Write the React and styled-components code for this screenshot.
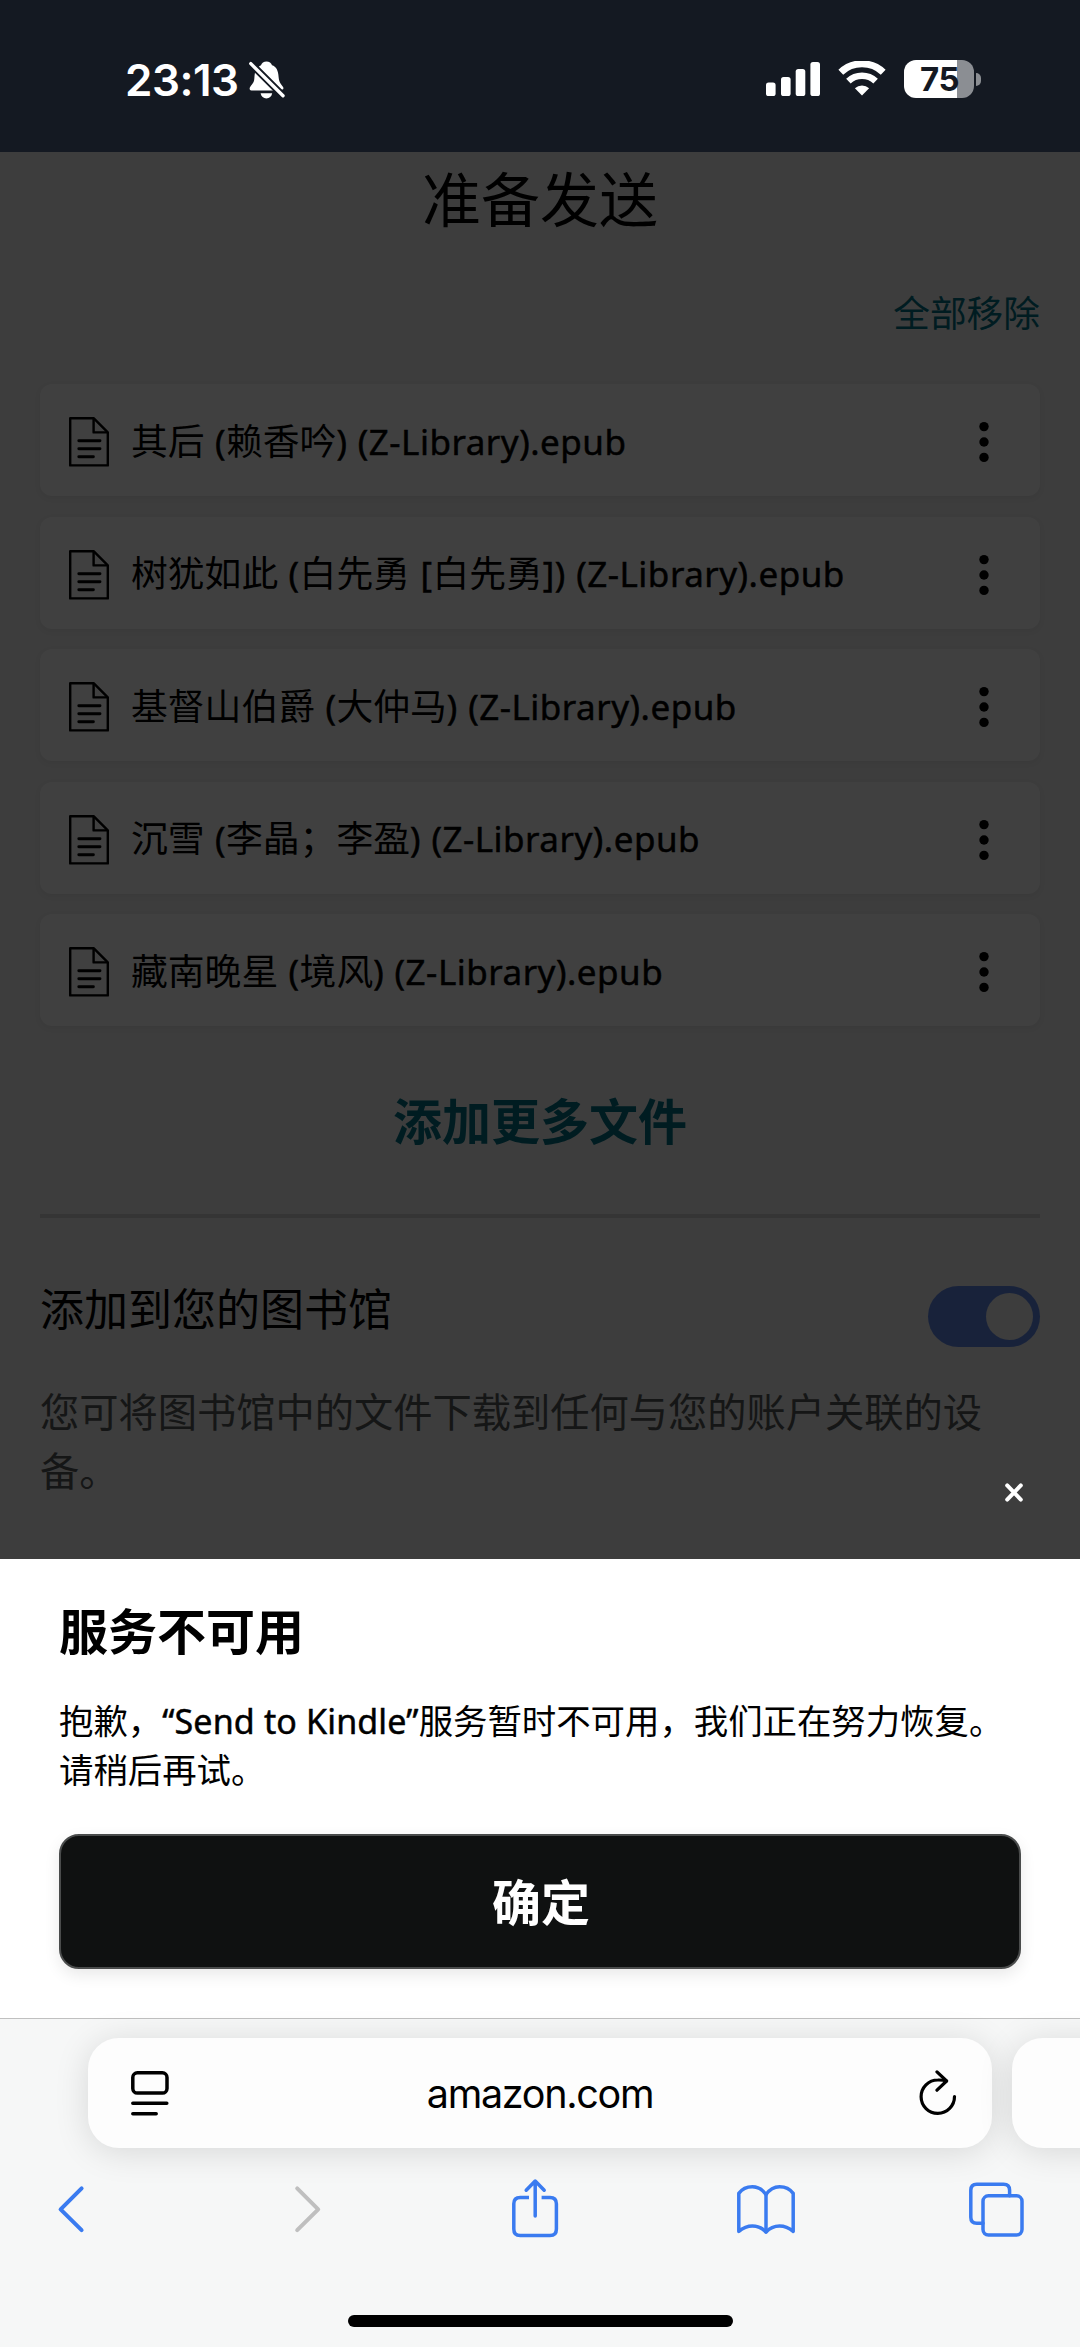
import React from 'react';
import styled, { createGlobalStyle } from 'styled-components';

const files = [
  '其后 (赖香吟) (Z-Library).epub',
  '树犹如此 (白先勇 [白先勇]) (Z-Library).epub',
  '基督山伯爵 (大仲马) (Z-Library).epub',
  '沉雪 (李晶；李盈) (Z-Library).epub',
  '藏南晚星 (境风) (Z-Library).epub',
];

// latin runs get their own face, the rest stays in the CJK one
const splitName = (name) =>
  name.split(/([\x20-\x7e]+)/).map((part, i) =>
    i % 2 ? <Latin key={i}>{part}</Latin> : part
  );

const StatusIcons = () => (
  <StatusRight>
    <svg width="54" height="36" viewBox="0 0 54 36" fill="#fff">
      <rect x="0" y="21.5" width="9.6" height="13.5" rx="2.6" />
      <rect x="15" y="16" width="9.6" height="19" rx="2.6" />
      <rect x="29.7" y="8" width="9.6" height="27" rx="2.6" />
      <rect x="44.4" y="1" width="9.6" height="34" rx="2.6" />
    </svg>
    <svg width="48" height="36" viewBox="0 0 48 36" fill="none" stroke="#fff">
      <path d="M2.8 11.2 A31 31 0 0 1 45.2 11.2" strokeWidth="7" />
      <path d="M10.4 20.1 A20 20 0 0 1 37.6 20.1" strokeWidth="6.6" />
      <path d="M24 34.6 L16.9 27.2 A10.4 10.4 0 0 1 31.1 27.2 Z" fill="#fff" stroke="none" />
    </svg>
    <BatteryWrap>
      <Battery>75</Battery>
      <BatteryTip />
    </BatteryWrap>
  </StatusRight>
);

const BellOff = () => (
  <svg width="36" height="38" viewBox="0 0 36 38">
    <path
      fill="#fff"
      d="M17.5 0.5 C14.8 0.5 12.6 2 12 4.3 C11 4.8 10.2 5.4 9.6 6 L30.8 27.2 C31.6 28 32.6 28.9 33.4 28.6 C34.6 28 34.9 26.9 33.7 25.4 C31.2 22.4 30 20.6 29.6 16 C29.2 9.4 27.2 5.6 23 4.3 C22.4 2 20.2 0.5 17.5 0.5 Z"
    />
    <path
      fill="#fff"
      d="M6 11.4 L24.2 29.6 H2.4 C0.4 29.6 0 27 1.6 25.2 C4.4 22 5.2 20.6 5.4 16.8 C5.5 15 5.6 13 6 11.4 Z"
    />
    <path fill="#fff" d="M11.6 32.2 H23.2 C22.6 35.6 20.4 37.4 17.4 37.4 C14.4 37.4 12.2 35.6 11.6 32.2 Z" />
    <path d="M1.8 2.6 L34 34.8" stroke="#141922" strokeWidth="7" />
    <path d="M1.8 2.6 L34 34.8" stroke="#fff" strokeWidth="3.4" strokeLinecap="round" />
  </svg>
);

const FileIcon = () => (
  <svg width="40" height="50" viewBox="0 0 40 50" fill="none" stroke="#000" strokeWidth="2.4">
    <path d="M1.2 1.2 H24.6 L38.8 15.4 V48.4 H1.2 Z" strokeLinejoin="round" />
    <path d="M24.6 1.2 V15.4 H38.8" strokeLinejoin="round" />
    <path d="M9.8 23.8 H31 M9.8 31.8 H31 M9.8 39.8 H24.4" strokeWidth="2.9" strokeLinecap="round" />
  </svg>
);

const MoreIcon = () => (
  <svg width="10" height="42" viewBox="0 0 10 42" fill="#000">
    <circle cx="5" cy="5.6" r="4.7" />
    <circle cx="5" cy="21" r="4.7" />
    <circle cx="5" cy="36.4" r="4.7" />
  </svg>
);

const App = () => (
  <Screen>
    <GlobalStyle />
    <StatusBar>
      <Clock>
        <span>23:13</span>
        <BellOff />
      </Clock>
      <StatusIcons />
    </StatusBar>

    <Page>
      <Heading>准备发送</Heading>
      <RemoveAll>全部移除</RemoveAll>
      <FileList>
        {files.map((name) => (
          <FileRow key={name}>
            <FileIcon />
            <FileName>{splitName(name)}</FileName>
            <MoreIcon />
          </FileRow>
        ))}
      </FileList>
      <AddMore>添加更多文件</AddMore>
      <Divider />
      <LibraryRow>
        <LibraryLabel>添加到您的图书馆</LibraryLabel>
        <Toggle>
          <Knob />
        </Toggle>
      </LibraryRow>
      <LibraryHint>您可将图书馆中的文件下载到任何与您的账户关联的设备。</LibraryHint>
      <Overlay>
        <svg width="18" height="19" viewBox="0 0 18 19" stroke="#fff" strokeWidth="4" strokeLinecap="round">
          <path d="M2.2 2.4 L15.8 16.6 M15.8 2.4 L2.2 16.6" />
        </svg>
      </Overlay>
    </Page>

    <Sheet>
      <SheetTitle>服务不可用</SheetTitle>
      <SheetText>
        抱歉，<Quote>“Send to Kindle”</Quote>服务暂时不可用，我们正在努力恢复。
        <br />
        请稍后再试。
      </SheetText>
      <OkButton>确定</OkButton>
    </Sheet>

    <BrowserBar>
      <AddressRow>
        <AddressPill>
          <svg width="38" height="45" viewBox="0 0 38 45" fill="none" stroke="#000" strokeWidth="3.5" strokeLinecap="round">
            <rect x="1.8" y="1.8" width="34.2" height="20.2" rx="4.6" />
            <path d="M1.8 32.3 H35.8 M1.8 42.7 H25.2" />
          </svg>
          <Host>amazon.com</Host>
          <svg width="38" height="46" viewBox="0 0 38 46" fill="none" stroke="#000" strokeWidth="3.2" strokeLinecap="round" strokeLinejoin="round">
            <path d="M35.5 26.6 A16.7 16.7 0 1 1 18.8 10 C22 9.9 25 10.2 27.4 11" />
            <path d="M18 1.9 L27.6 11 L18 20.2" />
          </svg>
        </AddressPill>
        <NextTab />
      </AddressRow>
      <Toolbar>
        <ToolIcon viewBox="0 0 64 64" strokeWidth="4">
          <path d="M37.6 11.4 L16.6 32.3 L37.6 53.2" />
        </ToolIcon>
        <ToolIcon viewBox="0 0 64 64" strokeWidth="4" $muted>
          <path d="M23.2 11.4 L44.2 32.3 L23.2 53.2" />
        </ToolIcon>
        <ToolIcon viewBox="0 0 64 64" strokeWidth="3.5">
          <path d="M25 20.4 H16.2 Q9.8 20.4 9.8 26.8 V52 Q9.8 58.6 16.2 58.6 H46 Q52.4 58.6 52.4 52 V26.8 Q52.4 20.4 46 20.4 H37.6" strokeLinecap="butt" />
          <path d="M31.2 39 V4.2 M22.2 13.2 L31.2 4 L40.2 13.2" />
        </ToolIcon>
        <ToolIcon viewBox="0 0 64 64" strokeWidth="3.5">
          <path d="M32 17.6 C28.6 12.6 23.6 9.7 18.4 9.7 C13 9.7 8 12 4.8 16.4 V54.4 C8.8 51 13 48.9 18.4 48.9 C23.8 48.9 28.4 51 32 55 C35.6 51 40.2 48.9 45.6 48.9 C51 48.9 55.2 51 59.2 54.4 V16.4 C56 12 51 9.7 45.6 9.7 C40.4 9.7 35.4 12.6 32 17.6 Z" />
          <path d="M32 17.6 V55" />
        </ToolIcon>
        <ToolIcon viewBox="0 0 64 64" strokeWidth="3.5">
          <rect x="19" y="18.8" width="39" height="39.2" rx="5.4" />
          <path d="M19 46.2 H12.8 Q6.8 46.2 6.8 40.2 V13.2 Q6.8 7.2 12.8 7.2 H39.6 Q45.6 7.2 45.6 13.2 V18.8" />
        </ToolIcon>
      </Toolbar>
      <HomeIndicator />
    </BrowserBar>
  </Screen>
);

export default App;

const GlobalStyle = createGlobalStyle`
  * {
    box-sizing: border-box;
  }
  body {
    margin: 0;
    font-family: "Noto Sans CJK SC", sans-serif;
    color: #000;
  }
  svg {
    display: block;
    flex-shrink: 0;
  }
`;

const Screen = styled.div`
  display: flex;
  flex-direction: column;
  width: 1080px;
  height: 2347px;
  overflow: hidden;
  background: #fff;
`;

const StatusBar = styled.header`
  display: flex;
  justify-content: space-between;
  flex-shrink: 0;
  height: 152px;
  padding: 60px 99px 0 125px;
  background: #141922;
  color: #fff;
  font-family: Inter, sans-serif;
`;

const Clock = styled.div`
  display: flex;
  gap: 10px;
  height: 40px;
  align-items: center;
  font-size: 44px;
  font-weight: 600;
  line-height: 40px;
  letter-spacing: -0.5px;
`;

const StatusRight = styled.div`
  display: flex;
  height: 38px;
  align-items: center;
  gap: 18px;
`;

const BatteryWrap = styled.div`
  display: flex;
  align-items: center;
  gap: 2px;
`;

const Battery = styled.div`
  width: 70px;
  height: 38px;
  padding-left: 1px;
  border-radius: 12px;
  background: linear-gradient(to right, #fff 53px, #8b8e93 53px);
  color: #141922;
  font-size: 33px;
  font-weight: 700;
  line-height: 39px;
  text-align: center;
  letter-spacing: -0.5px;
`;

const BatteryTip = styled.div`
  width: 5px;
  height: 13px;
  border-radius: 0 6px 6px 0;
  background: #8b8e93;
`;

const Page = styled.main`
  position: relative;
  flex-shrink: 0;
  height: 1407px;
  padding: 9px 40px 0;
  background: #f1f1f1;
`;

const Overlay = styled.div`
  position: absolute;
  inset: 0;
  display: flex;
  justify-content: flex-end;
  align-items: flex-end;
  padding: 0 57px 57px 0;
  background: rgba(0, 0, 0, 0.75);
`;

const Heading = styled.h1`
  margin: 0;
  font-size: 59px;
  font-weight: 400;
  line-height: 72px;
  text-align: center;
`;

const RemoveAll = styled.div`
  margin-top: 56px;
  color: #007185;
  font-size: 36.7px;
  line-height: 44px;
  text-align: right;
`;

const FileList = styled.div`
  display: flex;
  flex-direction: column;
  gap: 20.6px;
  margin-top: 51px;
`;

const FileRow = styled.div`
  display: flex;
  align-items: center;
  height: 112px;
  padding: 4px 51px 0 29px;
  border-radius: 12px;
  background: #fff;
  box-shadow: 0 2px 6px rgba(0, 0, 0, 0.06);
`;

const FileName = styled.div`
  flex: 1;
  margin-left: 22px;
  font-size: 36.8px;
  line-height: 48px;
  white-space: pre;
  padding-bottom: 7px;
`;

const Latin = styled.span`
  font-family: "Noto Sans", sans-serif;
  font-size: 35px;
  font-weight: 400;
  line-height: 0;
  letter-spacing: 0.5px;
  word-spacing: 0.8px;
  -webkit-text-stroke: 0.5px currentColor;
`;

const AddMore = styled.div`
  margin-top: 62.6px;
  color: #007185;
  font-size: 49px;
  font-weight: 700;
  line-height: 60px;
  text-align: center;
`;

const Divider = styled.div`
  height: 4px;
  margin-top: 65px;
  background: #d4d4d4;
`;

const LibraryRow = styled.div`
  display: flex;
  justify-content: space-between;
  align-items: flex-start;
  margin-top: 63px;
`;

const LibraryLabel = styled.div`
  font-size: 44px;
  line-height: 52px;
`;

const Toggle = styled.div`
  display: flex;
  justify-content: flex-end;
  width: 112px;
  height: 61px;
  margin-top: 5px;
  padding: 7px;
  border-radius: 31px;
  background: #6088e8;
`;

const Knob = styled.div`
  width: 47px;
  height: 47px;
  border-radius: 50%;
  background: #f1f1f1;
`;

const LibraryHint = styled.p`
  margin: 34px 0 0;
  color: #565959;
  font-size: 39.25px;
  line-height: 58.7px;
`;

const Sheet = styled.section`
  flex-shrink: 0;
  height: 459px;
  padding: 40px 59px 0;
  background: #fff;
`;

const SheetTitle = styled.h2`
  margin: 0;
  font-size: 49px;
  font-weight: 700;
  line-height: 60px;
`;

const SheetText = styled.p`
  margin: 36px 0 0;
  font-size: 34.4px;
  line-height: 49px;
  white-space: nowrap;
`;

const Quote = styled(Latin)`
  font-size: 34px;
  letter-spacing: 0.15px;
  word-spacing: 0;
`;

const OkButton = styled.button`
  display: block;
  width: 100%;
  height: 135px;
  margin-top: 41px;
  padding: 0 0 4px 2px;
  border: 2px solid #4a4c4c;
  border-radius: 20px;
  background: #0f1111;
  box-shadow: 0 6px 16px rgba(0, 0, 0, 0.09);
  color: #fff;
  font-family: inherit;
  font-size: 49px;
  font-weight: 700;
`;

const BrowserBar = styled.footer`
  display: flex;
  flex-direction: column;
  flex-shrink: 0;
  height: 329px;
  border-top: 1px solid #c0c0c0;
  background: #f6f7f7;
`;

const AddressRow = styled.div`
  display: flex;
  gap: 20px;
  padding: 19px 0 0 88px;
`;

const AddressPill = styled.div`
  display: flex;
  justify-content: space-between;
  align-items: center;
  flex-shrink: 0;
  width: 904px;
  height: 110px;
  padding: 0 35px 0 43px;
  border-radius: 31px;
  background: #fdfdfd;
  box-shadow: 0 4px 34px rgba(0, 0, 0, 0.13);
`;

const NextTab = styled(AddressPill)``;

const Host = styled.div`
  font-family: Inter, sans-serif;
  font-size: 39.5px;
  line-height: 48px;
  letter-spacing: -1.3px;
  padding: 2px 8px 0 0;
`;

const Toolbar = styled.nav`
  display: flex;
  justify-content: space-between;
  margin-top: 29px;
  padding: 0 52px 0 44px;
`;

const ToolIcon = styled.svg`
  width: 64px;
  height: 64px;
  fill: none;
  stroke: ${(props) => (props.$muted ? '#bfbfbf' : '#3a7bf0')};
  stroke-linecap: round;
  stroke-linejoin: round;
`;

const HomeIndicator = styled.div`
  width: 385px;
  height: 12px;
  margin: 74px auto 0;
  border-radius: 6px;
  background: #000;
`;
